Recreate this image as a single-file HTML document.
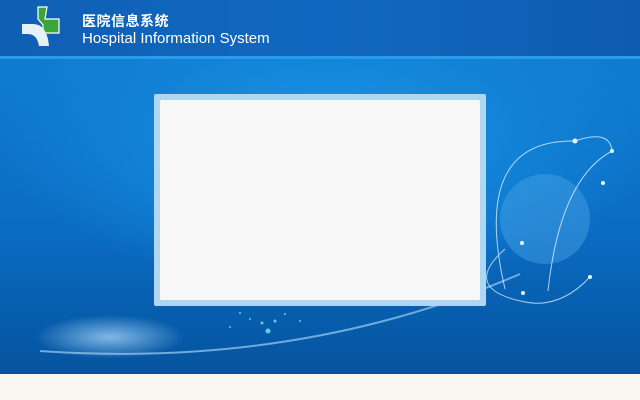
<!DOCTYPE html>
<html><head><meta charset="utf-8"><style>
*{margin:0;padding:0}
body{width:640px;height:400px;overflow:hidden;position:relative;background:#f8f6f0;font-family:"Liberation Sans","Noto Sans CJK SC",sans-serif}
#hdr{position:absolute;left:0;top:0;width:640px;height:56px;background:linear-gradient(90deg,#0f5fb4 0%,#1268c0 50%,#0d5cb0 100%)}
#stripe{position:absolute;left:0;top:56px;width:640px;height:3px;background:#2a9be8}
#main{position:absolute;left:0;top:59px;width:640px;height:315px;
background:radial-gradient(ellipse 420px 200px at 330px 70px,#1a93e6 0%,#1282d6 45%,transparent 80%),linear-gradient(180deg,#0f7cd2 0%,#0a6cc2 55%,#05539e 100%)}
#t1{position:absolute;left:82px;top:11px;color:#fff;font-size:14px;font-weight:bold;letter-spacing:0.5px}
#t2{position:absolute;left:82px;top:30px;color:#fff;font-size:15px}
#box{position:absolute;left:154px;top:94px;width:332px;height:212px;background:#b0d7f2;border-radius:2px}
#inner{position:absolute;left:160px;top:100px;width:320px;height:200px;background:#f8f8f8;border-radius:2px}
</style></head><body>
<div id="hdr"></div>
<div id="stripe"></div>
<div id="main">
<svg width="640" height="315" style="position:absolute;left:0;top:0">
<defs><radialGradient id="g"><stop offset="0" stop-color="#9fd0f5" stop-opacity=".8"/><stop offset="1" stop-color="#9fd0f5" stop-opacity="0"/></radialGradient></defs>
<ellipse cx="110" cy="278" rx="75" ry="22" fill="url(#g)"/>
<path d="M40 292 Q300 310 520 215" stroke="#9ccff2" stroke-width="2" fill="none" opacity=".7"/>
<circle cx="545" cy="160" r="45" fill="#4aa5e6" opacity=".45"/>
<g stroke="#d9f0ff" stroke-width="1" fill="none" opacity=".8">
<path d="M505 230 Q470 80 575 82"/>
<path d="M575 82 Q610 70 612 92"/>
<path d="M548 232 Q560 120 612 92"/>
<path d="M505 190 Q460 230 525 243 Q560 250 590 218"/>
</g>
<g fill="#eaf8ff"><circle cx="575" cy="82" r="2.5"/><circle cx="612" cy="92" r="2"/><circle cx="603" cy="124" r="2"/><circle cx="522" cy="184" r="2"/><circle cx="590" cy="218" r="2"/><circle cx="523" cy="234" r="2"/></g>
<g fill="#6fe0f5" opacity=".85"><circle cx="268" cy="272" r="2.5"/><circle cx="262" cy="264" r="1.5"/><circle cx="250" cy="260" r="1"/><circle cx="300" cy="262" r="1"/><circle cx="240" cy="254" r="1"/><circle cx="285" cy="255" r="1"/><circle cx="230" cy="268" r="1"/><circle cx="275" cy="262" r="1.5"/></g>
</svg>
</div>
<svg width="50" height="44" style="position:absolute;left:20px;top:4px">
<path d="M18 3 h9 l-2 12 h14 l0 14 h-16 v-8 l-5 -6z" fill="#3aa63a" stroke="#fff" stroke-width="1.2"/>
<path d="M2 20 h11 q14 0 16 22 h-10 q-2 -12 -11 -12 h-6z" fill="#e6f0f8"/>
</svg>
<div id="t1">医院信息系统</div>
<div id="t2">Hospital Information System</div>
<div id="box"></div>
<div id="inner"></div>
</body></html>
